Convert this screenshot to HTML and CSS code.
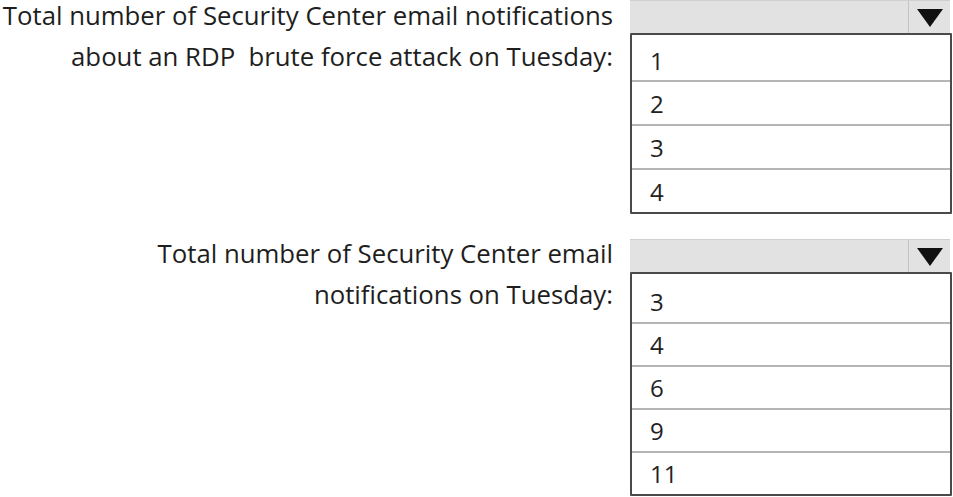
FILE: index.html
```html
<!DOCTYPE html>
<html>
<head>
<meta charset="utf-8">
<link rel="stylesheet" href="styles.css">
</head>
<body>
<div class="page">
  <div class="question q1">
    <div class="label">
      <div class="line">Total number of Security Center email notifications</div>
      <div class="line">about an RDP&nbsp; brute force attack on Tuesday:</div>
    </div>
    <div class="dropdown">
      <div class="header">
        <div class="value"></div>
        <div class="arrow"><svg width="26" height="18" viewBox="0 0 26 18"><polygon points="0,0 26,0 13,18" fill="#111"/></svg></div>
      </div>
      <div class="list">
        <div class="opt first">1</div>
        <div class="opt">2</div>
        <div class="opt">3</div>
        <div class="opt">4</div>
      </div>
    </div>
  </div>
  <div class="question q2">
    <div class="label">
      <div class="line">Total number of Security Center email</div>
      <div class="line">notifications on Tuesday:</div>
    </div>
    <div class="dropdown">
      <div class="header">
        <div class="value"></div>
        <div class="arrow"><svg width="26" height="18" viewBox="0 0 26 18"><polygon points="0,0 26,0 13,18" fill="#111"/></svg></div>
      </div>
      <div class="list">
        <div class="opt first">3</div>
        <div class="opt">4</div>
        <div class="opt">6</div>
        <div class="opt">9</div>
        <div class="opt">11</div>
      </div>
    </div>
  </div>
</div>
</body>
</html>
```
FILE: styles.css
```css
html, body {
  margin: 0;
  padding: 0;
  background: #fff;
}
body {
  font-family: "Open Sans", "Noto Sans", sans-serif;
  color: #1e1e1e;
  width: 953px;
  height: 497px;
  overflow: hidden;
}
.page {
  display: flex;
  flex-direction: column;
}
.question {
  display: grid;
  grid-template-columns: 613px 322px;
  column-gap: 17px;
  align-items: start;
}
.q2 {
  margin-top: 25px;
}
.label {
  text-align: right;
  font-size: 25.75px;
  white-space: nowrap;
  display: flex;
  flex-direction: column;
  gap: 11px;
}
.line {
  line-height: 30px;
  height: 30px;
}
.q2 .label {
  margin-top: -1px;
}
.header {
  display: flex;
  height: 33px;
  box-sizing: border-box;
  background: #e2e2e2;
  border-top: 1px solid #cfcfcf;
  margin-right: 2px;
}
.value {
  flex: 1;
  border-right: 1px solid #c4c4c4;
}
.arrow {
  width: 41px;
  display: flex;
  align-items: center;
  justify-content: center;
  padding-top: 2px;
}
.list {
  border: 2px solid #4a4a4a;
  border-radius: 1px;
  background: #fff;
}
.opt {
  height: 44px;
  box-sizing: border-box;
  border-top: 2px solid #b5b5b5;
  font-size: 24px;
  line-height: 43px;
  padding-left: 18px;
  color: #222;
}
.opt.first {
  border-top: none;
  height: 45px;
  line-height: 52px;
}
.q2 .opt {
  height: 43px;
  line-height: 42px;
}
.q2 .opt.first {
  height: 48px;
  line-height: 56px;
}
```
